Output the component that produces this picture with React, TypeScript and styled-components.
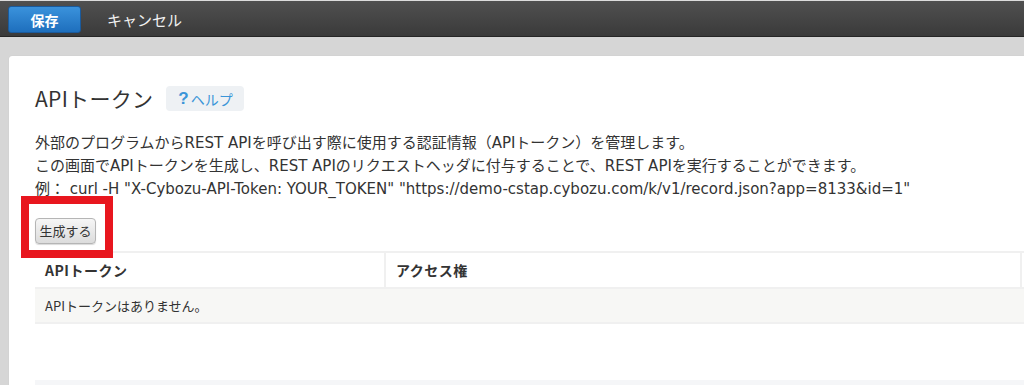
import React from "react";
import styled, { createGlobalStyle } from "styled-components";

const GlobalStyle = createGlobalStyle`
  html, body {
    margin: 0;
    padding: 0;
  }
  body {
    background: #d6d6d6;
    font-family: "Noto Sans CJK JP", "Liberation Sans", sans-serif;
    color: #333;
    overflow: hidden;
  }
`;

const Page = styled.div`
  width: 1024px;
  height: 385px;
  overflow: hidden;
  background: #d6d6d6;
`;

const TopBar = styled.div`
  height: 35px;
  border-top: 1px solid #dcdcdc;
  border-bottom: 1px solid #262626;
  background: linear-gradient(#505050, #3a3a3a);
  display: flex;
  align-items: center;
  padding-left: 8px;
  gap: 26px;
`;

const SaveButton = styled.button`
  width: 73px;
  height: 27px;
  margin-top: 2px;
  border: 1px solid #1a5a9c;
  border-radius: 3px;
  background: linear-gradient(#3a92dc, #1e6fbd);
  color: #fff;
  font-family: inherit;
  font-size: 14px;
  font-weight: bold;
  padding: 0;
`;

const CancelLink = styled.span`
  color: #f0f0f0;
  font-size: 15px;
  margin-top: 1px;
`;

const Body = styled.div`
  padding: 19px 0 0 9px;
`;

const Card = styled.div`
  background: #fff;
  border-top-left-radius: 3px;
  box-shadow: 0 0 1px rgba(0, 0, 0, 0.15);
  padding: 30px 0 0 26px;
  height: 400px;
`;

const TitleRow = styled.div`
  display: flex;
  align-items: center;
  gap: 13px;
  height: 25px;
`;

const Title = styled.h1`
  margin: 0;
  font-size: 21px;
  font-weight: normal;
  color: #333;
  line-height: 25px;
  letter-spacing: 0.3px;
`;

const HelpBadge = styled.span`
  display: inline-flex;
  align-items: center;
  gap: 2px;
  height: 25px;
  padding: 0 11px 0 12px;
  background: #eef1f4;
  border-radius: 4px;
  color: #3b95d8;
  font-size: 14px;
`;

const HelpMark = styled.span`
  font-size: 17px;
  font-weight: bold;
  font-family: "Liberation Sans", sans-serif;
`;

const Description = styled.p`
  margin: 21px 0 0;
  font-family: "DejaVu Sans", "Noto Sans CJK JP", sans-serif;
  font-size: 15px;
  line-height: 23px;
  color: #333;
  white-space: nowrap;
`;

const ButtonArea = styled.div`
  position: relative;
  margin-top: 16px;
  height: 34px;
`;

const GenerateButton = styled.button`
  width: 61px;
  height: 26px;
  padding: 0;
  border: 1px solid #b5b5b5;
  border-radius: 4px;
  background: linear-gradient(#f6f6f6, #dcdcdc);
  box-shadow: 0 1px 1px rgba(0, 0, 0, 0.15);
  color: #333;
  font-family: inherit;
  font-size: 13px;
`;

const Highlight = styled.div`
  position: absolute;
  left: -14px;
  top: -21px;
  width: 76px;
  height: 46px;
  border: 8px solid #e8161e;
  pointer-events: none;
`;

const Table = styled.div`
  display: grid;
  grid-template-columns: 349px 636px 100px;
  border-top: 2px solid #f0f0f0;
  border-bottom: 2px solid #f0f0f0;
`;

const HeadCell = styled.div<{ first?: boolean }>`
  height: 34px;
  display: flex;
  align-items: center;
  padding-left: 10px;
  font-size: 14px;
  font-weight: bold;
  letter-spacing: 0.5px;
  color: #333;
  border-left: ${(p) => (p.first ? "none" : "2px solid #f0f0f0")};
`;

const EmptyRow = styled.div`
  grid-column: 1 / -1;
  height: 33px;
  display: flex;
  align-items: center;
  padding-left: 10px;
  background: #f7f7f5;
  border-top: 2px solid #f0f0f0;
  font-size: 13px;
  color: #333;
`;

const NextSection = styled.div`
  margin-top: 56px;
  height: 20px;
  background: #f5f6f8;
`;

export default function App() {
  return (
    <Page>
      <GlobalStyle />
      <TopBar>
        <SaveButton>保存</SaveButton>
        <CancelLink>キャンセル</CancelLink>
      </TopBar>
      <Body>
        <Card>
          <TitleRow>
            <Title>APIトークン</Title>
            <HelpBadge>
              <HelpMark>?</HelpMark>ヘルプ
            </HelpBadge>
          </TitleRow>
          <Description>
            外部のプログラムからREST APIを呼び出す際に使用する認証情報（APIトークン）を管理します。
            <br />
            この画面でAPIトークンを生成し、REST APIのリクエストヘッダに付与することで、REST APIを実行することができます。
            <br />
            例： curl -H "X-Cybozu-API-Token: YOUR_TOKEN" "https://demo-cstap.cybozu.com/k/v1/record.json?app=8133&amp;id=1"
          </Description>
          <ButtonArea>
            <GenerateButton>生成する</GenerateButton>
            <Highlight />
          </ButtonArea>
          <Table>
            <HeadCell first>APIトークン</HeadCell>
            <HeadCell>アクセス権</HeadCell>
            <HeadCell />
            <EmptyRow>APIトークンはありません。</EmptyRow>
          </Table>
          <NextSection />
        </Card>
      </Body>
    </Page>
  );
}
